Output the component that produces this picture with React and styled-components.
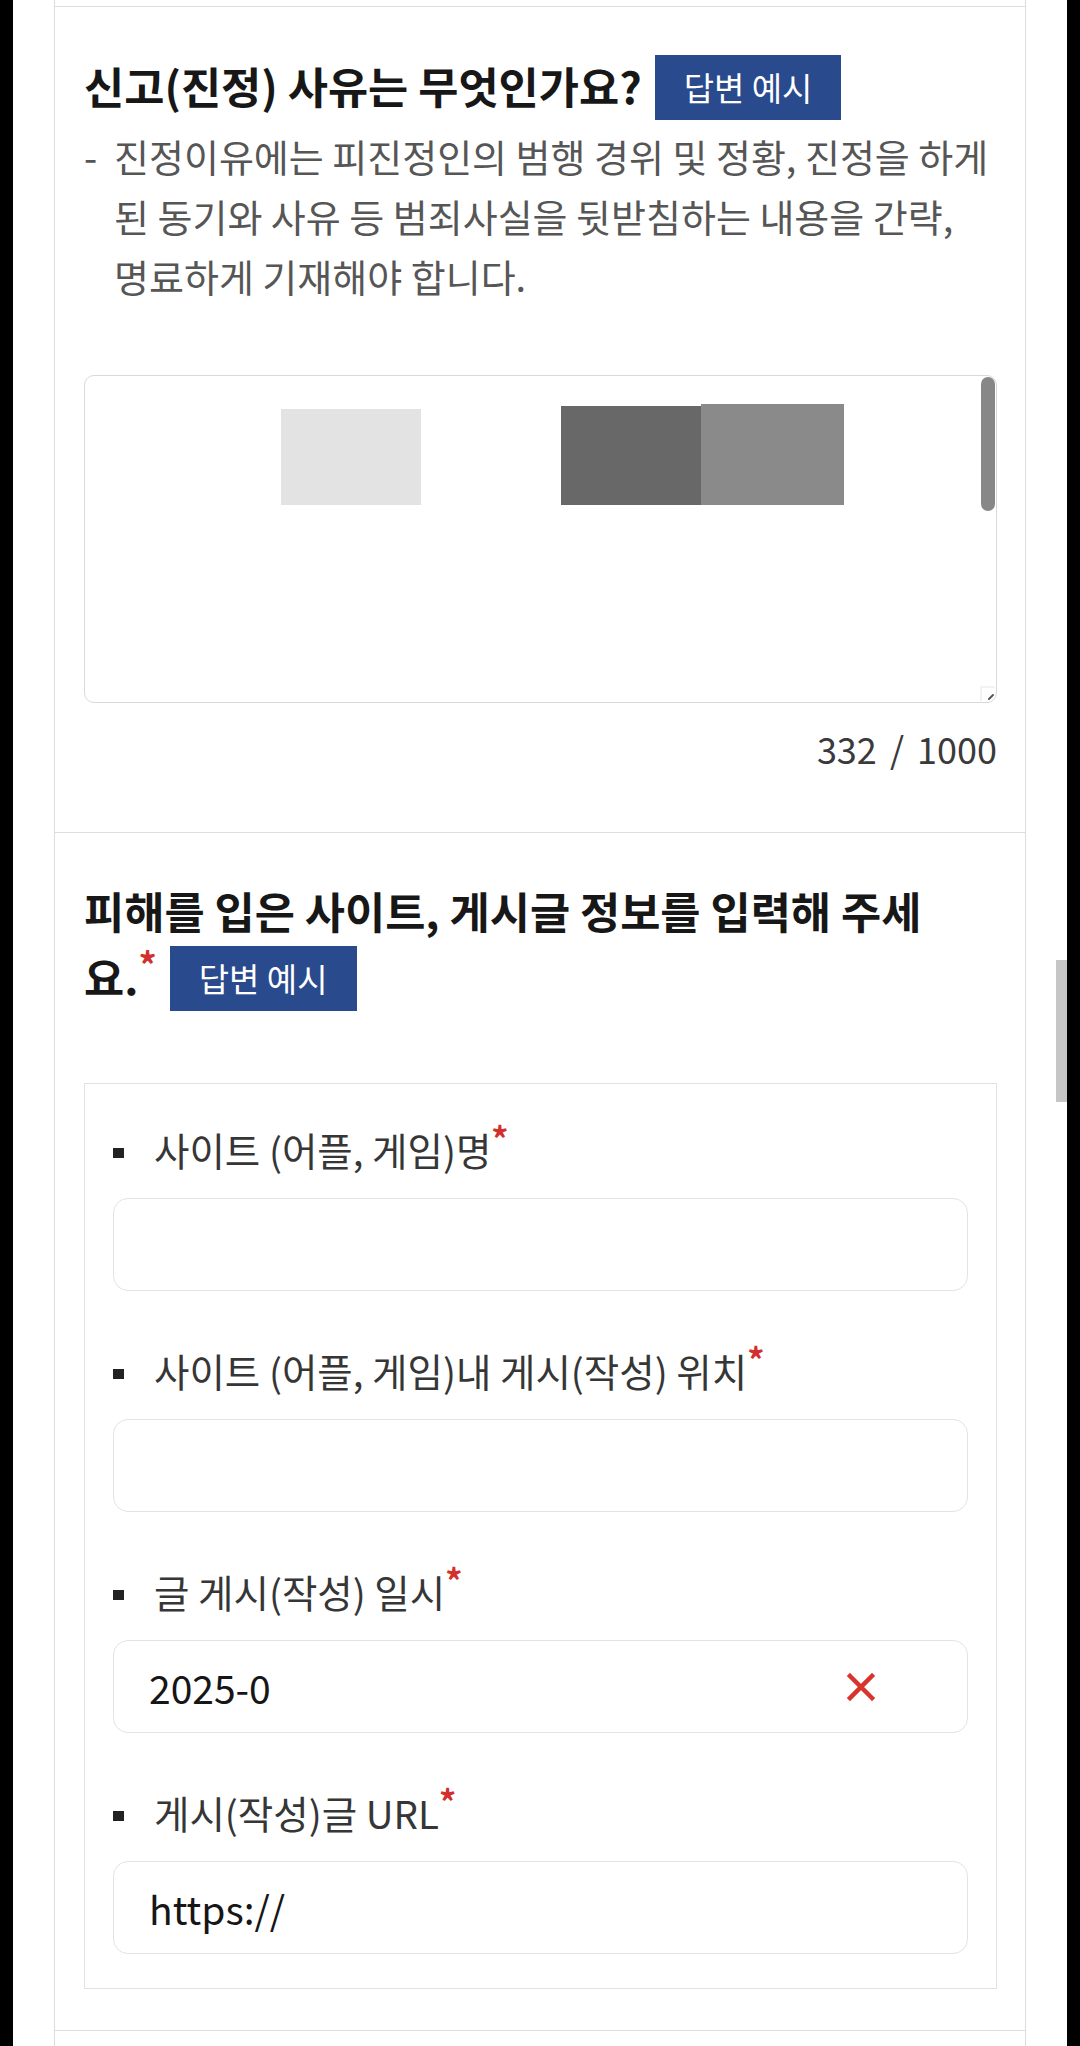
import React from "react";
import styled, { createGlobalStyle } from "styled-components";

const GlobalStyle = createGlobalStyle`
  html, body {
    margin: 0;
    padding: 0;
    background: #000;
  }
  body {
    font-family: "Noto Sans CJK KR", "Noto Sans", sans-serif;
    -webkit-font-smoothing: antialiased;
  }
  * {
    box-sizing: border-box;
  }
`;

const Screen = styled.div`
  position: relative;
  width: 1054px;
  height: 2046px;
  margin: 0 auto;
  padding: 0 41px;
  background: #fff;
  overflow: hidden;
`;

const ScrollThumb = styled.div`
  position: absolute;
  right: 0;
  top: 960px;
  width: 11px;
  height: 142px;
  background: #c6c6c6;
`;

const Card = styled.div`
  height: 100%;
  padding-top: 6px;
  border-left: 1px solid #dcdcdc;
  border-right: 1px solid #dcdcdc;
`;

const Section = styled.section`
  border-top: 1px solid #dedede;
  padding: ${(p) => p.$pad || "0"};
`;

const Title = styled.h2`
  margin: 0;
  font-size: 43.7px;
  font-weight: 700;
  line-height: 66px;
  color: #171717;
`;

const NoWrap = styled.span`
  white-space: nowrap;
`;

const Req = styled.span`
  color: #d2302c;
  font-size: ${(p) => p.$size || "34px"};
  font-weight: 700;
  vertical-align: super;
  line-height: 0;
`;

const ExampleButton = styled.button`
  display: inline-block;
  vertical-align: top;
  margin: 3px 0 0 13px;
  height: 65px;
  padding: 0 29px;
  border: none;
  background: #294a8c;
  color: #fff;
  font-family: inherit;
  font-size: 33px;
  font-weight: 400;
  line-height: 65px;
`;

const Guide = styled.div`
  display: flex;
  margin-top: 6px;
  font-size: 38px;
  line-height: 60px;
  color: #565656;
  word-break: keep-all;
`;

const Dash = styled.span`
  flex: 0 0 30px;
`;

const TextBox = styled.div`
  position: relative;
  margin-top: 69px;
  height: 328px;
  padding: 28px 0 0 196px;
  border: 1px solid #d9d9d9;
  border-radius: 10px;
`;

const BlurRow = styled.div`
  display: flex;
  align-items: flex-end;
`;

const Blur = styled.span`
  display: block;
  width: ${(p) => p.$w}px;
  height: ${(p) => p.$h}px;
  margin-right: ${(p) => p.$gap || 0}px;
  background: ${(p) => p.$c};
`;

const TextThumb = styled.div`
  position: absolute;
  top: 1px;
  right: 1px;
  width: 14px;
  height: 134px;
  border-radius: 7px;
  background: #878787;
`;

const Grip = styled.svg`
  position: absolute;
  right: 0;
  bottom: 0;
`;

const Counter = styled.div`
  margin-top: 21px;
  text-align: right;
  font-size: 36px;
  line-height: 48px;
  color: #3a3a3a;
  word-spacing: 5px;
`;

const FieldBox = styled.div`
  display: flex;
  flex-direction: column;
  gap: 54px;
  margin-top: 72px;
  padding: 40px 28px 34px;
  border: 1px solid #e2e2e2;
`;

const Field = styled.div`
  display: flex;
  flex-direction: column;
`;

const Label = styled.div`
  display: flex;
  align-items: center;
  margin-bottom: 24px;
  font-size: 38.5px;
  line-height: 50px;
  color: #363636;
`;

const Bullet = styled.span`
  flex: 0 0 11px;
  height: 10px;
  margin: 7px 30px 0 0;
  background: #222;
`;

const InputBox = styled.div`
  display: flex;
  align-items: center;
  height: 93px;
  padding: 0 35px;
  border: 1px solid #e3e3e3;
  border-radius: 15px;
  font-size: 39px;
  color: #161616;
`;

const ClearIcon = styled.svg`
  margin: 0 56px 0 auto;
  flex: 0 0 auto;
`;

const fields = [
  { label: "사이트 (어플, 게임)명", value: "" },
  { label: "사이트 (어플, 게임)내 게시(작성) 위치", value: "" },
  { label: "글 게시(작성) 일시", value: "2025-0", clear: true },
  { label: "게시(작성)글 URL", value: "https://" },
];

const App = () => {
  return (
    <>
      <GlobalStyle />
      <Screen>
        <Card>
          <Section $pad="45px 28px 60px 29px">
            <Title>
              신고(진정) 사유는 무엇인가요?
              <ExampleButton type="button">답변 예시</ExampleButton>
            </Title>
            <Guide>
              <Dash>-</Dash>
              <span>
                진정이유에는 피진정인의 범행 경위 및 정황, 진정을 하게 된 동기와 사유 등
                범죄사실을 뒷받침하는 내용을 간략, 명료하게 기재해야 합니다.
              </span>
            </Guide>
            <TextBox>
              <BlurRow>
                <Blur $w={140} $h={96} $gap={140} $c="#e3e3e3" />
                <Blur $w={140} $h={99} $c="#686868" />
                <Blur $w={143} $h={101} $c="#8a8a8a" />
              </BlurRow>
              <TextThumb />
              <Grip width="16" height="16" viewBox="0 0 16 16">
                <path d="M1 15 V1 H15" fill="none" stroke="#e6e6e6" strokeWidth="1" />
                <path d="M9 13 L13 9" stroke="#555" strokeWidth="2" strokeLinecap="round" />
              </Grip>
            </TextBox>
            <Counter>332 / 1000</Counter>
          </Section>

          <Section $pad="44px 28px 41px 29px">
            <Title>
              피해를 입은 사이트, 게시글 정보를 입력해 주세
              <NoWrap>
                요.<Req $size="36px">*</Req>
                <ExampleButton type="button">답변 예시</ExampleButton>
              </NoWrap>
            </Title>
            <FieldBox>
              {fields.map((f) => (
                <Field key={f.label}>
                  <Label>
                    <Bullet />
                    <span>
                      {f.label}
                      <Req>*</Req>
                    </span>
                  </Label>
                  <InputBox>
                    <span>{f.value}</span>
                    {f.clear && (
                      <ClearIcon width="30" height="30" viewBox="0 0 30 30">
                        <path
                          d="M4 4 L26 26 M26 4 L4 26"
                          stroke="#d9342b"
                          strokeWidth="4.5"
                          strokeLinecap="square"
                        />
                      </ClearIcon>
                    )}
                  </InputBox>
                </Field>
              ))}
            </FieldBox>
          </Section>

          <Section />
        </Card>
        <ScrollThumb />
      </Screen>
    </>
  );
};

export default App;
